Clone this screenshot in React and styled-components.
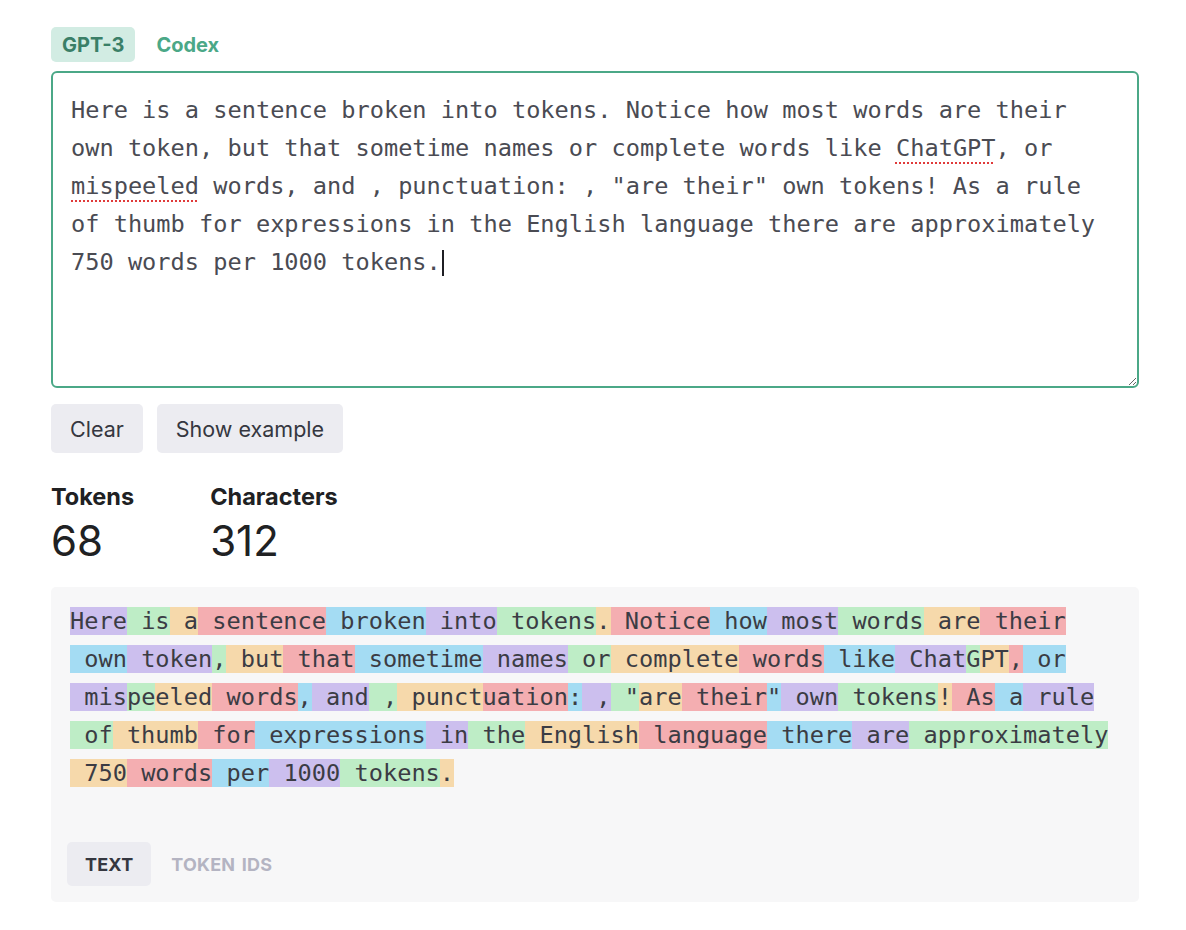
import React from "react";
import styled, { createGlobalStyle } from "styled-components";

const GlobalStyle = createGlobalStyle`
  body {
    margin: 0;
    background: #ffffff;
    font-family: Inter, "Noto Sans", sans-serif;
    color: #353740;
  }
`;

const COLORS = [
  "rgba(107, 64, 216, 0.3)",
  "rgba(104, 222, 122, 0.4)",
  "rgba(244, 172, 54, 0.4)",
  "rgba(239, 65, 70, 0.4)",
  "rgba(39, 181, 234, 0.4)",
];

const lines = [
  ["Here", " is", " a", " sentence", " broken", " into", " tokens", ".", " Notice", " how", " most", " words", " are", " their"],
  [" own", " token", ",", " but", " that", " sometime", " names", " or", " complete", " words", " like", " Chat", "G", "PT", ",", " or"],
  [" mis", "pe", "eled", " words", ",", " and", " ,", " punct", "uation", ":", " ,", ' "', "are", " their", '"', " own", " tokens", "!", " As", " a", " rule"],
  [" of", " thumb", " for", " expressions", " in", " the", " English", " language", " there", " are", " approximately"],
  [" 750", " words", " per", " 1000", " tokens", "."],
];

const Page = styled.div`
  width: 1088px;
  padding: 27px 0 28px 51px;
`;

const ModelTabs = styled.div`
  display: flex;
  gap: 10px;
  margin-bottom: 9px;
`;

const ModelTab = styled.button`
  height: 35px;
  padding: 0 11px;
  border: none;
  border-radius: 5px;
  font-family: Inter, sans-serif;
  font-size: 20px;
  font-weight: 700;
  background: ${(p) => (p.$active ? "#d2ece3" : "transparent")};
  color: ${(p) => (p.$active ? "#3a7f67" : "#4ba887")};
  cursor: pointer;
`;

const Editor = styled.div`
  box-sizing: border-box;
  width: 1088px;
  height: 317px;
  border: 2px solid #4ba887;
  border-radius: 6px;
  padding: 18px;
  font-family: "DejaVu Sans Mono", "Liberation Mono", monospace;
  font-size: 23.64px;
  line-height: 38px;
  color: #4a4b53;
  white-space: pre-wrap;
  overflow: auto;
  resize: vertical;
`;

const Misspelled = styled.span`
  text-decoration: underline dotted #e03a3a;
  text-decoration-thickness: 2px;
  text-underline-offset: 6px;
`;

const Caret = styled.span`
  display: inline-block;
  width: 2px;
  height: 26px;
  margin-left: 1px;
  background: #1f1f24;
  vertical-align: -6px;
`;

const Actions = styled.div`
  display: flex;
  gap: 14px;
  margin-top: 16px;
`;

const Button = styled.button`
  height: 49px;
  padding: 0 19px;
  border: none;
  border-radius: 5px;
  background: #ececf1;
  color: #353740;
  font-family: Inter, sans-serif;
  font-size: 21.5px;
  cursor: pointer;
`;

const Stats = styled.div`
  display: flex;
  gap: 76px;
  margin-top: 30px;
`;

const Stat = styled.div`
  display: flex;
  flex-direction: column;
  gap: 5px;
`;

const StatLabel = styled.div`
  font-size: 23.5px;
  font-weight: 700;
  line-height: 28px;
  color: #202123;
`;

const StatValue = styled.div`
  font-size: 42px;
  line-height: 50px;
  color: #202123;
`;

const TokenPanel = styled.div`
  box-sizing: border-box;
  width: 1088px;
  height: 315px;
  margin-top: 21px;
  padding: 15px 19px 16px;
  background: #f7f7f8;
  border-radius: 5px;
`;

const TokenLines = styled.div`
  font-family: "DejaVu Sans Mono", "Liberation Mono", monospace;
  font-size: 23.64px;
  line-height: 38px;
  color: #3b3c44;
  white-space: pre;
`;

const TokenLine = styled.div`
  height: 38px;
`;

const Token = styled.span`
  background: ${(p) => p.$color};
`;

const ViewTabs = styled.div`
  display: flex;
  gap: 2px;
  margin: 50px 0 0 -3px;
`;

const ViewTab = styled.button`
  height: 44px;
  padding: 0 18px;
  border: none;
  border-radius: 5px;
  background: ${(p) => (p.$active ? "#ececf1" : "transparent")};
  color: ${(p) => (p.$active ? "#353740" : "#b4b4c2")};
  font-family: Inter, sans-serif;
  font-size: 18px;
  font-weight: 700;
  letter-spacing: 0.2px;
  word-spacing: 2px;
  text-transform: uppercase;
  cursor: pointer;
`;

export default function App() {
  let index = 0;
  return (
    <>
      <GlobalStyle />
      <Page>
        <ModelTabs>
          <ModelTab $active>GPT-3</ModelTab>
          <ModelTab>Codex</ModelTab>
        </ModelTabs>
        <Editor role="textbox" aria-multiline="true">
          Here is a sentence broken into tokens. Notice how most words are their own token, but that sometime names or complete words like{" "}
          <Misspelled>ChatGPT</Misspelled>, or <Misspelled>mispeeled</Misspelled> words, and , punctuation: , "are their" own tokens! As a rule of thumb for expressions in the English language there are approximately 750 words per 1000 tokens.
          <Caret />
        </Editor>
        <Actions>
          <Button>Clear</Button>
          <Button>Show example</Button>
        </Actions>
        <Stats>
          <Stat>
            <StatLabel>Tokens</StatLabel>
            <StatValue>68</StatValue>
          </Stat>
          <Stat>
            <StatLabel>Characters</StatLabel>
            <StatValue>312</StatValue>
          </Stat>
        </Stats>
        <TokenPanel>
          <TokenLines>
            {lines.map((line, li) => (
              <TokenLine key={li}>
                {line.map((tok) => {
                  const i = index++;
                  return (
                    <Token key={i} $color={COLORS[i % COLORS.length]}>
                      {tok}
                    </Token>
                  );
                })}
              </TokenLine>
            ))}
          </TokenLines>
          <ViewTabs>
            <ViewTab $active>Text</ViewTab>
            <ViewTab>Token IDs</ViewTab>
          </ViewTabs>
        </TokenPanel>
      </Page>
    </>
  );
}
